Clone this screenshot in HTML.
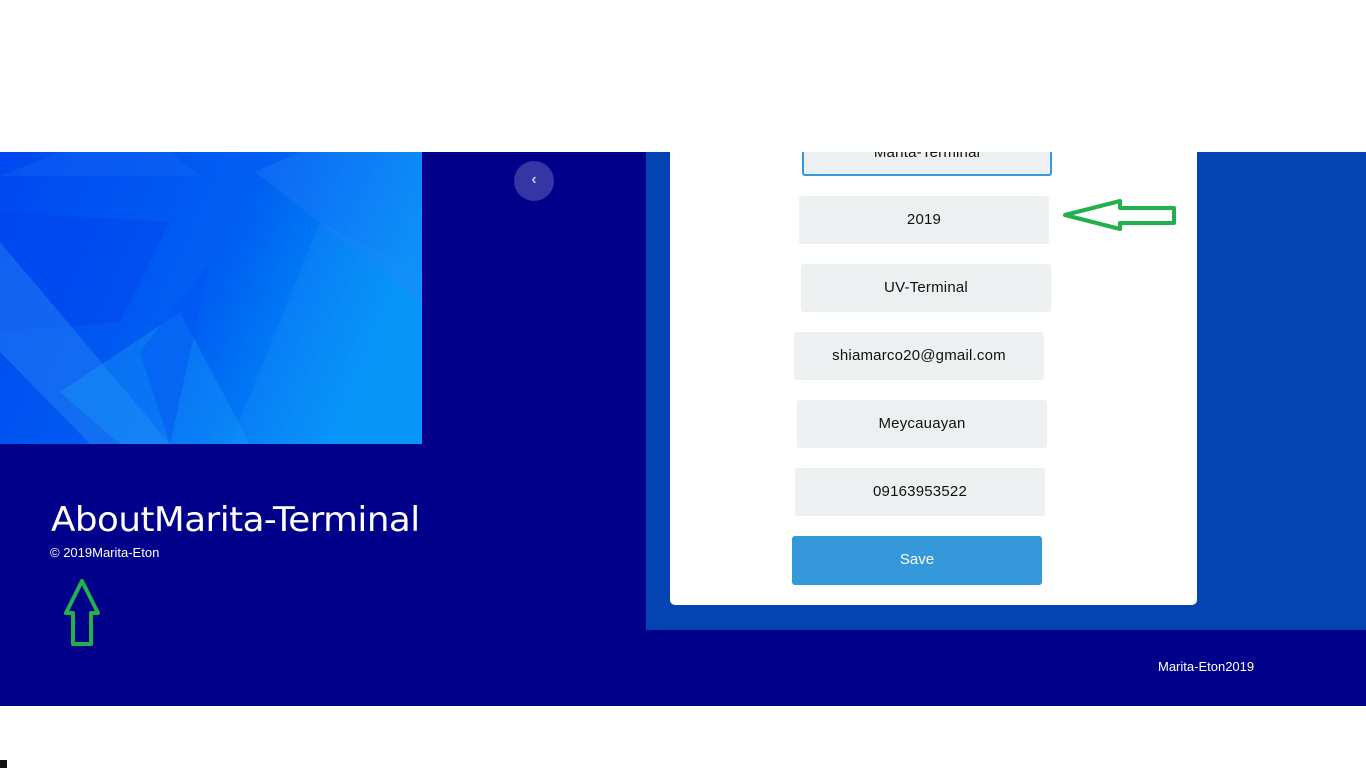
<!DOCTYPE html>
<html><head><meta charset="utf-8"><style>
body{margin:0;width:1366px;height:768px;background:#fff;position:relative;overflow:hidden;font-family:"Liberation Sans",sans-serif}
.abs{position:absolute}
.navy{left:0;top:152px;width:1366px;height:554px;background:#00008b}
.img{left:0;top:152px;width:422px;height:292px;overflow:hidden}
.panel{left:646px;top:152px;width:720px;height:478px;background:#0343b2}
.card{left:670px;top:152px;width:527px;height:453px;background:#fff;border-radius:0 0 5px 5px}
.in{position:absolute;width:250px;height:48px;background:#ecf0f1;border-radius:3px;text-align:center;line-height:48px;font-size:15px;color:#111;letter-spacing:.2px}
.btn{position:absolute;left:792px;top:536px;width:250px;height:49px;background:#3498db;border-radius:3px;color:#fff;text-align:center;line-height:48px;font-size:15px}
</style></head><body>
<div class="abs navy"></div>
<div class="abs img"><svg width="422" height="292" viewBox="0 0 422 292">
<defs><linearGradient id="g" x1="0" y1="0" x2="1" y2="0.3"><stop offset="0" stop-color="#0048f0"/><stop offset="0.6" stop-color="#0060f2"/><stop offset="1" stop-color="#0098f8"/></linearGradient></defs>
<rect width="422" height="292" fill="url(#g)"/>
<polygon points="0,24 200,24 170,0 60,0" fill="#1a6cf5" opacity=".3"/>
<polygon points="0,60 170,70 120,170 0,180" fill="#0040ee" opacity=".4"/>
<polygon points="255,20 422,150 422,0 300,0" fill="#2a80f8" opacity=".3"/>
<polygon points="0,90 170,292 90,292 0,200" fill="#2d8cf6" opacity=".4"/>
<polygon points="60,240 180,160 250,292 120,292" fill="#1aa0f8" opacity=".35"/>
<polygon points="140,200 210,110 170,292" fill="#0050f5" opacity=".4"/>
<polygon points="320,70 422,120 422,292 230,292" fill="#1a90f8" opacity=".3"/>
</svg></div>
<div class="abs" style="left:514px;top:161px;width:40px;height:40px;border-radius:50%;background:#3535a5;color:#c8c8ee;text-align:center;line-height:38px;font-size:16px;font-weight:bold">‹</div>
<div class="abs panel"></div>
<div class="abs card"></div>
<div class="in" style="left:802px;top:130px;border:2px solid #3498db;height:42px;line-height:42px;width:246px">Marita-Terminal</div>
<div class="abs" style="left:0;top:0;width:1366px;height:152px;background:#fff"></div>
<div class="in" style="left:799px;top:196px">2019</div>
<div class="in" style="left:801px;top:264px">UV-Terminal</div>
<div class="in" style="left:794px;top:332px">shiamarco20@gmail.com</div>
<div class="in" style="left:797px;top:400px">Meycauayan</div>
<div class="in" style="left:795px;top:468px">09163953522</div>
<div class="btn">Save</div>
<svg class="abs" style="left:1060px;top:198px" width="120" height="36"><polygon points="5,17 60,3 60,10 114,10 114,25 60,25 60,31" fill="none" stroke="#22b04c" stroke-width="4" stroke-linejoin="round"/></svg>
<div class="abs" style="left:51px;top:498px;color:#fff;font-family:'Comic Sans MS','DejaVu Sans',sans-serif;font-size:34px;line-height:44px;letter-spacing:-0.5px;transform:scaleX(1.05);transform-origin:left">AboutMarita-Terminal</div>
<div class="abs" style="left:50px;top:545px;color:#fff;font-size:13px">© 2019Marita-Eton</div>
<svg class="abs" style="left:58px;top:578px" width="50" height="72"><polygon points="24,3 40,35 33,35 33,66 15,66 15,35 8,35" fill="none" stroke="#22b04c" stroke-width="4" stroke-linejoin="round"/></svg>
<div class="abs" style="left:1158px;top:659px;color:#fff;font-size:13px">Marita-Eton2019</div>
<div class="abs" style="left:0;top:760px;width:7px;height:8px;background:#111"></div>
</body></html>
